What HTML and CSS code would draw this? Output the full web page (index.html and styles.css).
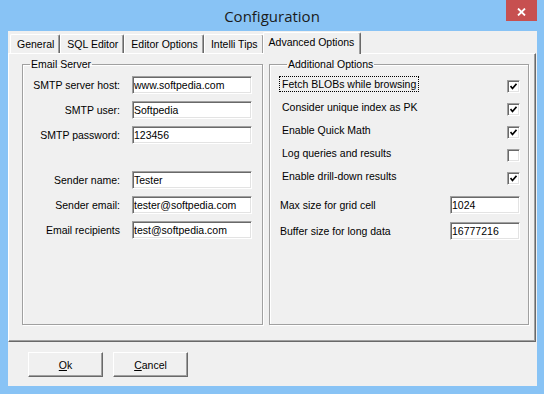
FILE: index.html
```html
<!DOCTYPE html>
<html lang="en">

<head>
    <meta charset="UTF-8">
    <meta name="viewport" content="width=device-width, initial-scale=1.0">
    <title>Configuration</title>
    <link rel="stylesheet" href="styles.css">
</head>

<body>

    <div class="window">

        <!-- Title Bar -->
        <div class="titlebar">
            <span class="title">Configuration</span>
            <span class="close">
                <svg width="9" height="8" viewBox="0 0 9 8">
                    <path d="M1 0.5 L8 7.5 M8 0.5 L1 7.5" stroke="#fff" stroke-width="1.8" fill="none" />
                </svg>
            </span>
        </div>

        <div class="client">
            <!-- Tabs -->
            <div class="tabs">
                <span class="tab">General</span>
                <span class="tab">SQL Editor</span>
                <span class="tab">Editor Options</span>
                <span class="tab">Intelli Tips</span>
                <span class="tab active">Advanced Options</span>
            </div>

            <div class="page">
                <fieldset class="group email">
                    <legend>Email Server</legend>
                    <div class="form-grid">
                        <label>SMTP server host:</label>
                        <input class="field" type="text" value="www.softpedia.com">
                        <label>SMTP user:</label>
                        <input class="field" type="text" value="Softpedia">
                        <label>SMTP password:</label>
                        <input class="field" type="text" value="123456">
                        <label class="spaced">Sender name:</label>
                        <input class="field spaced" type="text" value="Tester">
                        <label>Sender email:</label>
                        <input class="field" type="text" value="tester@softpedia.com">
                        <label>Email recipients</label>
                        <input class="field" type="text" value="test@softpedia.com">
                    </div>
                </fieldset>

                <fieldset class="group options">
                    <legend>Additional Options</legend>
                    <div class="option">
                        <span class="opt-label focused">Fetch BLOBs while browsing</span>
                        <span class="check"><svg width="7" height="7" viewBox="0 0 7 7"><path d="M0.5 3 L2.5 5.5 L6.5 0.8" stroke="#000" stroke-width="1.7" fill="none" /></svg></span>
                    </div>
                    <div class="option">
                        <span class="opt-label">Consider unique index as PK</span>
                        <span class="check"><svg width="7" height="7" viewBox="0 0 7 7"><path d="M0.5 3 L2.5 5.5 L6.5 0.8" stroke="#000" stroke-width="1.7" fill="none" /></svg></span>
                    </div>
                    <div class="option">
                        <span class="opt-label">Enable Quick Math</span>
                        <span class="check"><svg width="7" height="7" viewBox="0 0 7 7"><path d="M0.5 3 L2.5 5.5 L6.5 0.8" stroke="#000" stroke-width="1.7" fill="none" /></svg></span>
                    </div>
                    <div class="option">
                        <span class="opt-label">Log queries and results</span>
                        <span class="check"></span>
                    </div>
                    <div class="option">
                        <span class="opt-label">Enable drill-down results</span>
                        <span class="check"><svg width="7" height="7" viewBox="0 0 7 7"><path d="M0.5 3 L2.5 5.5 L6.5 0.8" stroke="#000" stroke-width="1.7" fill="none" /></svg></span>
                    </div>

                    <div class="size-row first">
                        <span>Max size for grid cell</span>
                        <input class="field small" type="text" value="1024">
                    </div>
                    <div class="size-row">
                        <span>Buffer size for long data</span>
                        <input class="field small" type="text" value="16777216">
                    </div>
                </fieldset>
            </div>

            <!-- Dialog Buttons -->
            <div class="buttons">
                <button class="btn"><u>O</u>k</button>
                <button class="btn"><u>C</u>ancel</button>
            </div>
        </div>
    </div>

</body>

</html>
```

FILE: styles.css
```css
/* Basic Reset */
* {
    margin: 0;
    padding: 0;
    box-sizing: border-box;
}

body {
    background-color: #88c3f5;
    font-family: 'Liberation Sans', Arial, sans-serif;
    font-size: 10.5px;
    color: #000;
}

.window {
    width: 544px;
    height: 394px;
}

/* Title Bar */
.titlebar {
    display: grid;
    grid-template-columns: 38px 1fr 38px;
    height: 31px;
}

.title {
    grid-column: 2;
    text-align: center;
    font-family: 'Open Sans', 'Noto Sans', sans-serif;
    font-size: 15px;
    line-height: 32px;
    color: #1b1b1b;
}

.close {
    width: 31px;
    height: 21px;
    background-color: #c75050;
    display: flex;
    align-items: center;
    justify-content: center;
    padding-top: 2px;
}

/* Client Area */
.client {
    margin: 0 7px 0 8px;
    height: 355px;
    background-color: #f0f0f0;
    display: flex;
    flex-direction: column;
}

.tabs {
    display: flex;
    align-items: flex-end;
    height: 22px;
    padding-left: 2px;
}

.tab {
    height: 19px;
    line-height: 18px;
    padding: 0 5px 0 6px;
    border-top: 1px solid #fff;
    border-left: 1px solid #fff;
    border-right: 1px solid #696969;
    box-shadow: inset -1px 0 #a0a0a0;
    border-radius: 2px 2px 0 0;
    background-color: #f0f0f0;
}

.tab.active {
    height: 22px;
    line-height: 19px;
    margin: 0 -2px -1px -1px;
    padding: 0 6px 0 5px;
    position: relative;
    z-index: 1;
}

.page {
    height: 289px;
    margin-right: 1px;
    border-top: 1px solid #fff;
    border-left: 1px solid #fff;
    border-right: 1px solid #696969;
    border-bottom: 1px solid #696969;
    box-shadow: inset -1px -1px #a0a0a0;
    display: flex;
    gap: 6px;
    padding: 4px 0 0 13px;
}

/* Group Boxes */
.group {
    height: 267px;
    border: 1px solid #a0a0a0;
    box-shadow: inset 1px 1px #fff, 1px 1px #fff;
}

.group legend {
    margin-left: 7px;
    padding: 0 1px;
    line-height: 13px;
}

.email {
    width: 241px;
    padding-top: 5px;
}

.options {
    width: 260px;
    padding: 4px 8px 0 10px;
}

.form-grid {
    display: grid;
    grid-template-columns: 97px 120px;
    column-gap: 12px;
    row-gap: 7px;
    align-items: center;
}

.form-grid label {
    text-align: right;
}

.form-grid .spaced {
    margin-top: 20px;
}

.field {
    height: 18px;
    width: 120px;
    padding: 0 1px;
    border: 1px solid;
    border-color: #a0a0a0 #fff #fff #a0a0a0;
    box-shadow: inset 1px 1px #696969, inset -1px -1px #e3e3e3;
    background-color: #fff;
    font-family: inherit;
    font-size: 10.5px;
    color: #000;
    outline: none;
}

.field.small {
    width: 70px;
}

/* Option Rows */
.option {
    display: flex;
    align-items: center;
    justify-content: space-between;
    height: 23px;
}

.opt-label {
    padding: 0 2px;
    line-height: 14px;
    margin-bottom: 5px;
}

.opt-label.focused {
    outline: 1px dotted #000;
    outline-offset: 0;
}

.check {
    width: 13px;
    height: 13px;
    border: 1px solid;
    border-color: #a0a0a0 #fff #fff #a0a0a0;
    box-shadow: inset 1px 1px #696969, inset -1px -1px #e3e3e3;
    background-color: #fff;
    display: flex;
    align-items: center;
    justify-content: center;
}

.size-row {
    display: flex;
    align-items: center;
    justify-content: space-between;
    margin-top: 8px;
}

.size-row.first {
    margin-top: 6px;
}

/* Dialog Buttons */
.buttons {
    display: flex;
    gap: 10px;
    padding: 10px 0 0 20px;
}

.btn {
    width: 75px;
    height: 25px;
    border: 1px solid;
    border-color: #fff #696969 #696969 #fff;
    box-shadow: inset -1px -1px #a0a0a0;
    background-color: #f0f0f0;
    font-family: inherit;
    font-size: 10.5px;
    color: #000;
}
```
